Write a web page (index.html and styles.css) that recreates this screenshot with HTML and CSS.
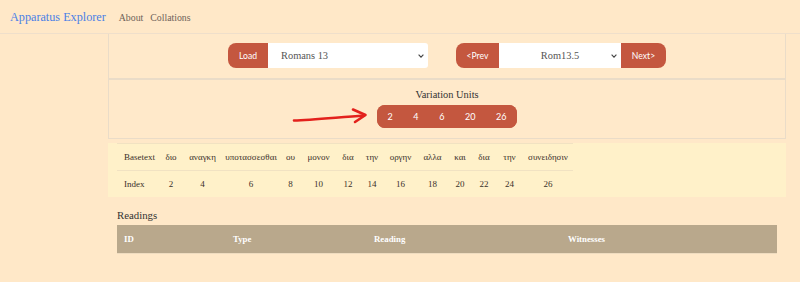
FILE: index.html
```html
<!DOCTYPE html>
<html lang="en">
<head>
<meta charset="utf-8">
<title>Apparatus Explorer</title>
<link rel="stylesheet" href="styles.css">
</head>
<body>
<nav class="navbar">
  <a class="brand" href="#">Apparatus Explorer</a>
  <a class="nav-link" href="#">About</a>
  <a class="nav-link" href="#">Collations</a>
</nav>
<main class="main">
  <section class="panel panel-controls">
    <div class="group">
      <button class="btn btn-first">Load</button>
      <div class="select-wrap select-book">
        <select class="select"><option>Romans 13</option></select>
        <svg class="chev" width="6" height="4" viewBox="0 0 6 4"><path d="M0.6 0.6 L3 3.2 L5.4 0.6" fill="none" stroke="#444" stroke-width="1.1"/></svg>
      </div>
    </div>
    <div class="group">
      <button class="btn btn-first btn-prev">&lt;Prev</button>
      <div class="select-wrap select-verse">
        <select class="select select-center"><option>Rom13.5</option></select>
        <svg class="chev" width="6" height="4" viewBox="0 0 6 4"><path d="M0.6 0.6 L3 3.2 L5.4 0.6" fill="none" stroke="#444" stroke-width="1.1"/></svg>
      </div>
      <button class="btn btn-last btn-next">Next&gt;</button>
    </div>
  </section>
  <section class="panel panel-units">
    <h2 class="units-title">Variation Units</h2>
    <div class="unit-group">
      <button class="unit">2</button>
      <button class="unit">4</button>
      <button class="unit">6</button>
      <button class="unit">20</button>
      <button class="unit">26</button>
    </div>
    <svg class="arrow" width="80" height="22" viewBox="0 0 80 22">
      <path d="M3 15.5 C 20 15, 45 12.5, 73 10.5" fill="none" stroke="#e3211c" stroke-width="2.6" stroke-linecap="round"/>
      <path d="M62 4.5 L74.5 10 L64 17" fill="none" stroke="#e3211c" stroke-width="2.6" stroke-linecap="round" stroke-linejoin="round"/>
    </svg>
  </section>
  <div class="collation">
    <table class="basetext">
      <colgroup>
        <col class="c-label"><col class="c-24"><col class="c-39"><col class="c-58"><col class="c-21"><col class="c-35"><col class="c-24"><col class="c-24"><col class="c-33"><col class="c-31"><col class="c-24"><col class="c-24"><col class="c-27"><col class="c-50">
      </colgroup>
      <tbody>
        <tr>
          <th class="label">Basetext</th>
          <td>διο</td><td>αναγκη</td><td>υποτασσεσθαι</td><td>ου</td><td>μονον</td><td>δια</td><td>την</td><td>οργην</td><td>αλλα</td><td>και</td><td>δια</td><td>την</td><td>συνειδησιν</td>
        </tr>
        <tr>
          <th class="label">Index</th>
          <td>2</td><td>4</td><td>6</td><td>8</td><td>10</td><td>12</td><td>14</td><td>16</td><td>18</td><td>20</td><td>22</td><td>24</td><td>26</td>
        </tr>
      </tbody>
    </table>
  </div>
  <section class="readings">
    <h3 class="readings-title">Readings</h3>
    <table class="readings-table">
      <colgroup><col class="r-id"><col class="r-type"><col class="r-reading"><col class="r-wit"></colgroup>
      <thead>
        <tr><th>ID</th><th>Type</th><th>Reading</th><th>Witnesses</th></tr>
      </thead>
      <tbody></tbody>
    </table>
  </section>
</main>
</body>
</html>
```

FILE: styles.css
```css
* { box-sizing: border-box; }

html, body {
  margin: 0;
  padding: 0;
}

body {
  background: #ffe8c8;
  font-family: "Liberation Serif", "Times New Roman", serif;
  color: #3a3029;
  width: 800px;
  height: 282px;
  overflow: hidden;
}

/* navbar */
.navbar {
  height: 34px;
  display: flex;
  align-items: center;
  border-bottom: 1px solid #efdfcb;
  padding-left: 10px;
}

.brand {
  color: #4a80e6;
  font-size: 12.2px;
  text-decoration: none;
  margin-right: 13px;
  padding-top: 1px;
}

.nav-link {
  color: #6e6258;
  font-size: 9.8px;
  text-decoration: none;
  margin-right: 7px;
  padding-top: 1px;
}

/* main column */
.main {
  margin-left: 108px;
  width: 678px;
}

.panel {
  border: 1px solid #eadcc8;
  background: #ffe9ca;
}

.panel-controls {
  display: flex;
  justify-content: center;
  gap: 28px;
  padding: 9px 0 10px;
  border-top: none;
}

.group {
  display: flex;
  height: 25px;
}

.btn {
  border: none;
  background: #c4573f;
  color: #fff;
  font-family: Lato, "Liberation Sans", sans-serif;
  font-size: 8.6px;
  padding: 0;
  height: 25px;
  cursor: pointer;
}

.btn-first {
  width: 40px;
  border-radius: 8px 0 0 8px;
}

.btn-prev { width: 43px; }

.btn-last {
  width: 45px;
  border-radius: 0 8px 8px 0;
}

.select-wrap {
  position: relative;
  height: 25px;
}

.select-book { width: 160px; }
.select-verse { width: 122px; }

.select {
  appearance: none;
  -webkit-appearance: none;
  width: 100%;
  height: 25px;
  border: none;
  border-radius: 0 3px 3px 0;
  background: #fff;
  font-family: "Liberation Serif", serif;
  font-size: 10.4px;
  color: #555;
  padding: 0 0 0 13px;
  outline: none;
}

.select-verse .select { border-radius: 0; }

.select-center {
  text-align: center;
  text-align-last: center;
  padding: 0;
}

.chev {
  position: absolute;
  right: 4px;
  top: 11px;
}

/* variation units */
.panel-units {
  position: relative;
  display: flex;
  flex-direction: column;
  align-items: center;
  padding: 9px 0 10px;
}

.units-title {
  margin: 0 0 4px;
  height: 12px;
  line-height: 12px;
  font-size: 10.4px;
  font-weight: normal;
  color: #333;
}

.unit-group {
  display: flex;
  height: 23px;
  border-radius: 8px;
  overflow: hidden;
  background: #c4573f;
}

.unit {
  border: none;
  background: #c4573f;
  color: #fff;
  font-family: Lato, "Liberation Sans", sans-serif;
  font-size: 9px;
  height: 23px;
  padding: 0 10.3px;
  cursor: pointer;
}

.arrow {
  position: absolute;
  left: 182px;
  top: 25px;
}

/* collation table */
.collation {
  margin-top: 4px;
  background: #fff1c9;
  height: 54px;
  padding: 0 9px;
}

.basetext {
  border-collapse: collapse;
  table-layout: fixed;
  width: 456px;
  font-size: 9px;
  color: #3a3029;
}

.basetext tr {
  height: 27px;
  border-top: 1px solid #f1e2c2;
}

.basetext th,
.basetext td {
  padding: 0 1px;
  text-align: center;
  font-weight: normal;
  white-space: nowrap;
  color: #3a3029;
  font-family: "Liberation Serif", "DejaVu Serif", serif;
}

.basetext .label {
  text-align: left;
  padding-left: 7px;
}

.c-label { width: 42px; }
.c-21 { width: 21px; }
.c-24 { width: 24px; }
.c-27 { width: 27px; }
.c-31 { width: 31px; }
.c-33 { width: 33px; }
.c-35 { width: 35px; }
.c-39 { width: 39px; }
.c-50 { width: 50px; }
.c-58 { width: 58px; }

/* readings */
.readings {
  padding: 0 8px 0 9px;
}

.readings-title {
  margin: 11px 0 3px;
  height: 14px;
  line-height: 14px;
  font-size: 10.8px;
  font-weight: normal;
  color: #333;
}

.readings-table {
  width: 660px;
  border-collapse: collapse;
  table-layout: fixed;
}

.readings-table th {
  background: #b9a88c;
  color: #fff;
  height: 28px;
  padding: 0 7px;
  text-align: left;
  font-size: 8.8px;
  font-weight: bold;
  border-bottom: 1px solid #efdcc0;
}

.r-id { width: 109px; }
.r-type { width: 141px; }
.r-reading { width: 194px; }
.r-wit { width: 216px; }
```
